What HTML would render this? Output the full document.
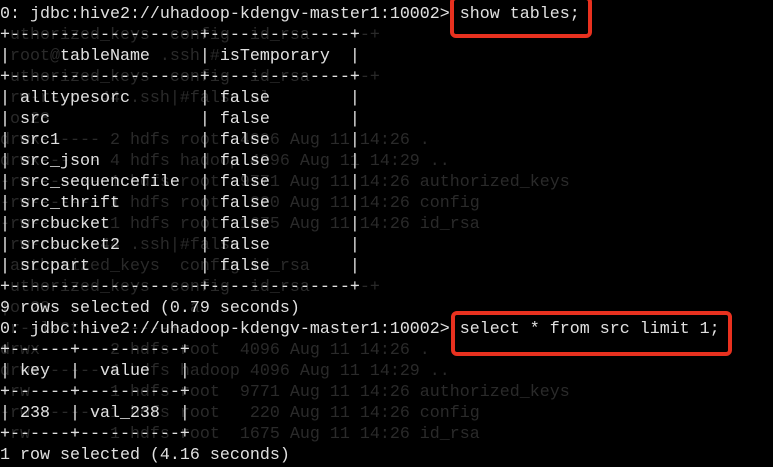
<!DOCTYPE html>
<html><head><meta charset="utf-8"><style>
html,body{margin:0;padding:0;background:#000;width:773px;height:467px;overflow:hidden}
pre{position:absolute;left:0;top:4px;margin:0;font-family:"Liberation Mono",monospace;font-size:16.67px;line-height:21px;white-space:pre}
#g{color:#2a2a2a}
#m{color:#e0e0e0}
.box{position:absolute;border:4px solid #e8311f;border-radius:6px;box-sizing:border-box}
</style></head><body>
<pre id="g">

+uthorized_keys--config--id_rsa------+
|root@tableName .ssh|#isTemporary  |
+uthorized_keys--config--id_rsa------+
|rw-r--r--44 .ssh|#false al
|o 28
drwx------ 2 hdfs root  4096 Aug 11 14:26 .
drwx------ 4 hdfs hadoop 4096 Aug 11 14:29 ..
-rw------- 1 hdfs root  9771 Aug 11 14:26 authorized_keys
-rw------- 1 hdfs root   220 Aug 11 14:26 config
-rw------- 1 hdfs root  1675 Aug 11 14:26 id_rsa
|rw-r--r--44 .ssh|#false
|authorized_keys  config id_rsa
+uthorized_keys--config--id_rsa------+
|o 28              a
 r--l-2t---------+
drwx------ 2 hdfs root  4096 Aug 11 14:26 .
drwx------ 4 hdfs hadoop 4096 Aug 11 14:29 ..
-rw------- 1 hdfs root  9771 Aug 11 14:26 authorized_keys
-rw------- 1 hdfs root   220 Aug 11 14:26 config
-rw------- 1 hdfs root  1675 Aug 11 14:26 id_rsa</pre>
<pre id="m">0: jdbc:hive2://uhadoop-kdengv-master1:10002> show tables;
+-------------------+--------------+
|     tableName     | isTemporary  |
+-------------------+--------------+
| alltypesorc       | false        |
| src               | false        |
| src1              | false        |
| src_json          | false        |
| src_sequencefile  | false        |
| src_thrift        | false        |
| srcbucket         | false        |
| srcbucket2        | false        |
| srcpart           | false        |
+-------------------+--------------+
9 rows selected (0.79 seconds)
0: jdbc:hive2://uhadoop-kdengv-master1:10002> select * from src limit 1;
+------+----------+
| key  |  value   |
+------+----------+
| 238  | val_238  |
+------+----------+
1 row selected (4.16 seconds)</pre>
<div class="box" style="left:450px;top:-4px;width:142px;height:42px"></div>
<div class="box" style="left:451px;top:311px;width:281px;height:45px"></div>
</body></html>
